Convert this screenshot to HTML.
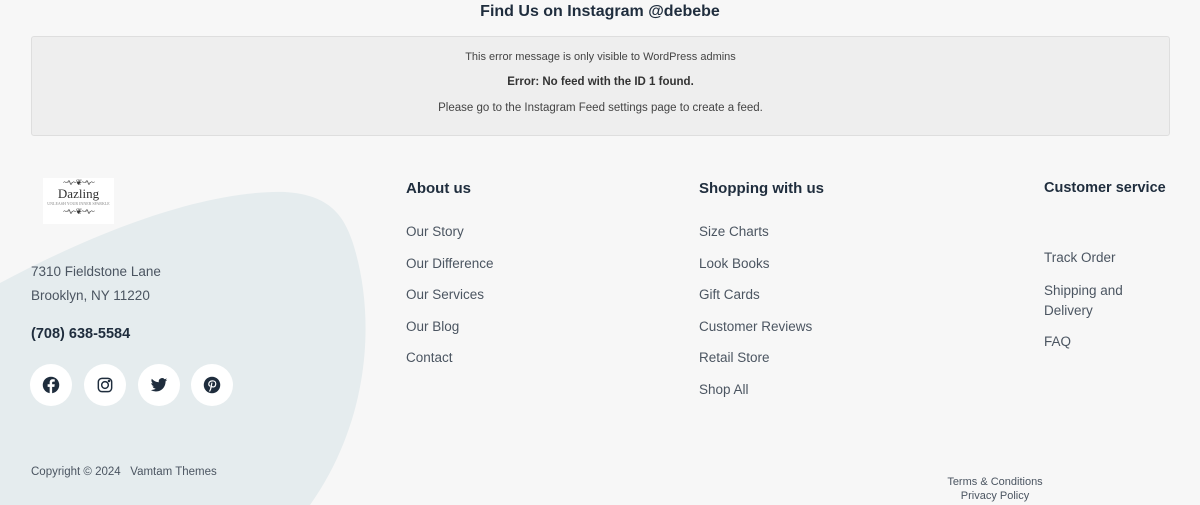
<!DOCTYPE html>
<html><head><style>
body{margin:0;width:1200px;height:505px;background:#f7f7f7;font-family:"Liberation Sans",sans-serif;position:relative;overflow:hidden;color:#1f2d3d}
.a{position:absolute}
h3{margin:0;font-size:15px;font-weight:bold;color:#1f2d3d;white-space:nowrap}
.l{font-size:13.5px;color:#4b5561;position:absolute;white-space:nowrap}
.ic{position:absolute;top:364px;width:42px;height:42px;border-radius:50%;background:#fff;display:flex;align-items:center;justify-content:center}
</style></head><body>
<svg class="a" style="left:0;top:0" width="1200" height="505"><path d="M0 283 C90 235 200 190 285 192 C330 195 345 215 355 250 C375 320 370 420 310 505 L0 505 Z" fill="#e5ecee"/></svg>
<div class="a" style="left:0;top:3px;width:1200px;text-align:center;font-size:16px;font-weight:bold;color:#1f2d3d">Find Us on Instagram @debebe</div>
<div class="a" style="left:31px;top:36px;width:1137px;height:98px;background:#eeeeee;border:1px solid #dedede;border-radius:3px;text-align:center;font-size:11px;color:#444">
<div style="position:absolute;top:14px;width:100%">This error message is only visible to WordPress admins</div>
<div style="position:absolute;top:39px;width:100%;font-weight:bold;font-size:11.5px;color:#333">Error: No feed with the ID 1 found.</div>
<div style="position:absolute;top:65px;width:100%;font-size:11.5px">Please go to the Instagram Feed settings page to create a feed.</div>
</div>
<div class="a" style="left:43px;top:178px;width:71px;height:46px;background:#fff;text-align:center;font-family:'Liberation Serif',serif;color:#333">
<div style="font-size:8px;line-height:9px;letter-spacing:-1px">~∿~❦~∿~</div>
<div style="font-size:13px;line-height:13px">Dazling</div>
<div style="font-size:4px;line-height:7px;color:#888">UNLEASH YOUR INNER SPARKLE</div>
<div style="font-size:8px;line-height:9px;letter-spacing:-1px">~∿~❦~∿~</div>
</div>
<div class="l" style="left:31px;top:264px">7310 Fieldstone Lane</div>
<div class="l" style="left:31px;top:288px">Brooklyn, NY 11220</div>
<div class="a" style="left:31px;top:326px;font-size:14.5px;font-weight:bold">(708) 638-5584</div>
<div class="ic" style="left:30px"><svg width="18" height="18" viewBox="0 0 24 24"><circle cx="12" cy="12" r="11" fill="#1f2d3d"/><path d="M13.5 24V14.5H16.5L17 11H13.5V9C13.5 8 14 7.5 15 7.5H17V4.5C16 4.4 15 4.3 14.3 4.3 11.8 4.3 10.2 5.8 10.2 8.6V11H7.5V14.5H10.2V24Z" fill="#fff"/></svg></div>
<div class="ic" style="left:84px"><svg width="16" height="16" viewBox="0 0 24 24" fill="none" stroke="#1f2d3d" stroke-width="2.2"><rect x="2" y="2" width="20" height="20" rx="5.5"/><circle cx="12" cy="12" r="5"/><circle cx="18" cy="6" r="0.8" fill="#1f2d3d"/></svg></div>
<div class="ic" style="left:138px"><svg width="18" height="18" viewBox="0 0 24 24"><path d="M23 5c-.8.4-1.7.6-2.6.7.9-.6 1.6-1.4 2-2.5-.9.5-1.9.9-2.9 1.1A4.5 4.5 0 0 0 11.8 8.4 12.8 12.8 0 0 1 2.5 3.7a4.5 4.5 0 0 0 1.4 6A4.5 4.5 0 0 1 1.8 9.1v.1a4.5 4.5 0 0 0 3.6 4.400 4.5 4.5 0 0 1-2 .1 4.5 4.5 0 0 0 4.2 3.1A9 9 0 0 1 1 18.6 12.8 12.8 0 0 0 7.9 20.6c8.3 0 12.8-6.9 12.8-12.8v-.6C21.6 6.6 22.4 5.9 23 5z" fill="#1f2d3d"/></svg></div>
<div class="ic" style="left:191px"><svg width="18" height="18" viewBox="0 0 24 24"><circle cx="12" cy="12" r="11" fill="#1f2d3d"/><path d="M11 14.5c-.5 2.3-1 4-2 5.5M12.5 6.5c-3 0-4.8 2-4.8 4.2 0 1.200.5 2.2 1.3 2.6M11.5 13.5c.5 1 1.5 1.3 2.5 1.1 2-.4 3-2.400 3-4.4 0-2.2-1.8-3.8-4.5-3.8M11.8 9.5L10.3 16" stroke="#fff" stroke-width="1.6" fill="none" stroke-linecap="round"/></svg></div>
<div class="a" style="left:31px;top:466px;font-size:11.5px;color:#4b5561">Copyright © 2024 &nbsp;&nbsp;Vamtam Themes</div>
<h3 class="a" style="left:406px;top:180px">About us</h3>
<div class="l" style="left:406px;top:224px">Our Story</div>
<div class="l" style="left:406px;top:256px">Our Difference</div>
<div class="l" style="left:406px;top:287px">Our Services</div>
<div class="l" style="left:406px;top:319px">Our Blog</div>
<div class="l" style="left:406px;top:350px">Contact</div>
<h3 class="a" style="left:699px;top:180px">Shopping with us</h3>
<div class="l" style="left:699px;top:224px">Size Charts</div>
<div class="l" style="left:699px;top:256px">Look Books</div>
<div class="l" style="left:699px;top:287px">Gift Cards</div>
<div class="l" style="left:699px;top:319px">Customer Reviews</div>
<div class="l" style="left:699px;top:350px">Retail Store</div>
<div class="l" style="left:699px;top:382px">Shop All</div>
<h3 class="a" style="left:1044px;top:180px;font-size:14.5px">Customer service</h3>
<div class="l" style="left:1044px;top:250px">Track Order</div>
<div class="l" style="left:1044px;top:281px;line-height:20px;white-space:normal;width:110px">Shipping and Delivery</div>
<div class="l" style="left:1044px;top:334px">FAQ</div>
<div class="a" style="left:895px;top:475px;width:200px;text-align:center;font-size:11px;color:#4b5561;line-height:14px">Terms &amp; Conditions<br>Privacy Policy</div>
</body></html>
